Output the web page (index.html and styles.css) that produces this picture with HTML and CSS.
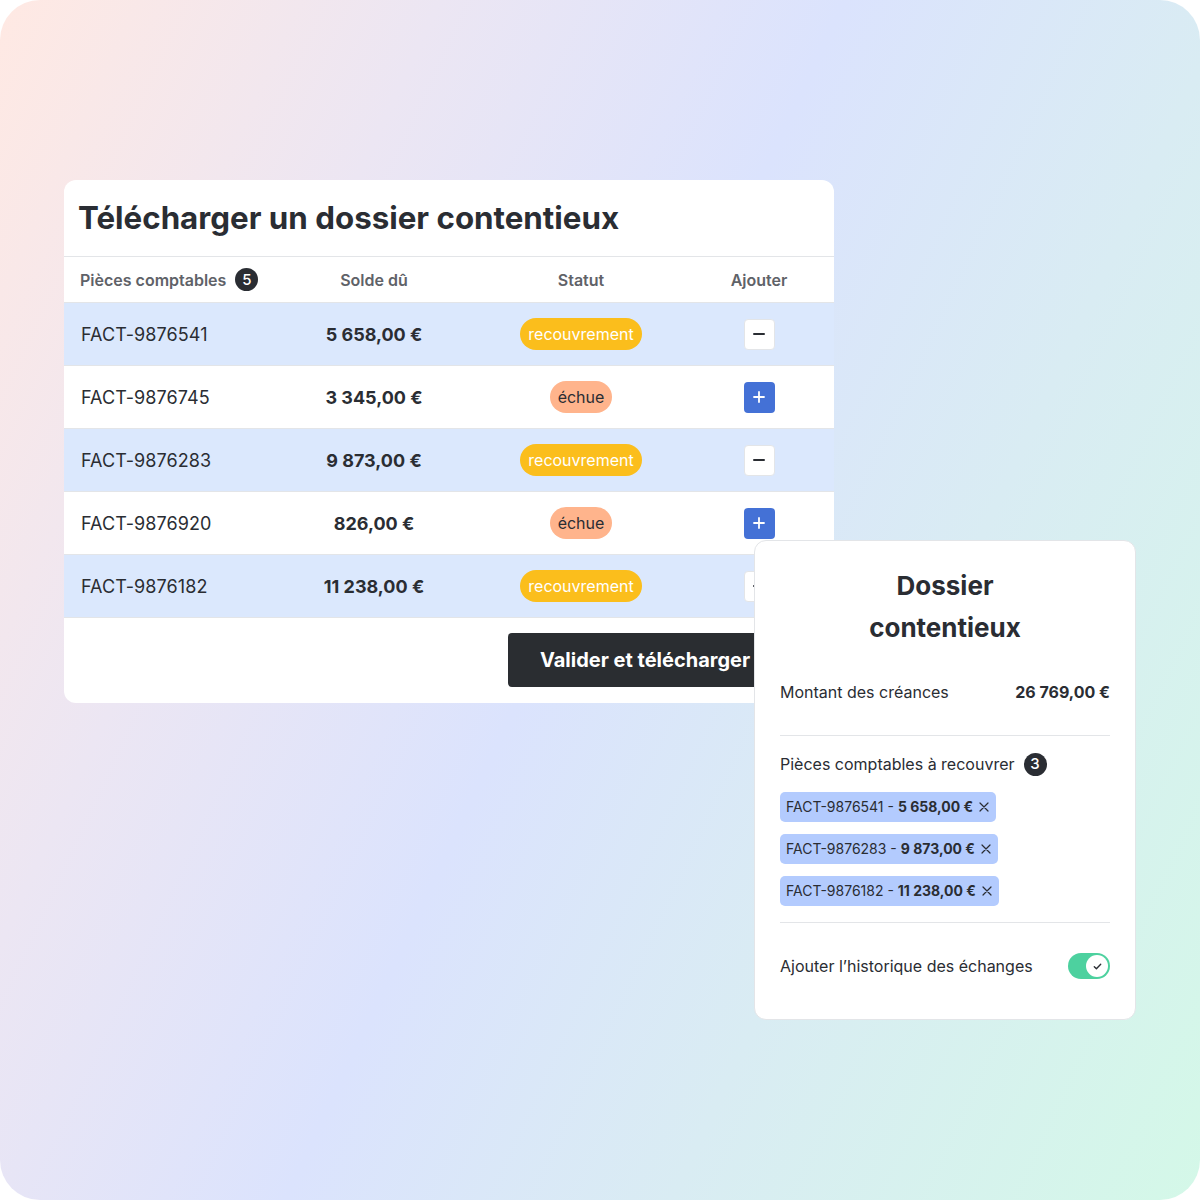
FILE: index.html
```html
<!DOCTYPE html>
<html lang="fr">
<head>
<meta charset="utf-8">
<link rel="stylesheet" href="styles.css">
</head>
<body>
<div class="canvas">
  <section class="card">
    <h1 class="card-title">Télécharger un dossier contentieux</h1>
    <div class="table">
      <div class="row head">
        <div class="cell first">Pièces comptables <span class="count">5</span></div>
        <div class="cell">Solde dû</div>
        <div class="cell">Statut</div>
        <div class="cell">Ajouter</div>
      </div>
      <div class="row tint">
        <div class="cell first ref">FACT-9876541</div>
        <div class="cell amount">5 658,00 €</div>
        <div class="cell"><span class="badge yellow">recouvrement</span></div>
        <div class="cell"><span class="btn minus"><svg viewBox="0 0 16 16" width="16" height="16"><path d="M3 8h10" stroke="#2a2d33" stroke-width="2" stroke-linecap="round"/></svg></span></div>
      </div>
      <div class="row">
        <div class="cell first ref">FACT-9876745</div>
        <div class="cell amount">3 345,00 €</div>
        <div class="cell"><span class="badge peach">échue</span></div>
        <div class="cell"><span class="btn plus"><svg viewBox="0 0 16 16" width="16" height="16"><path d="M3 8h10M8 3v10" stroke="#fff" stroke-width="1.8" stroke-linecap="round"/></svg></span></div>
      </div>
      <div class="row tint">
        <div class="cell first ref">FACT-9876283</div>
        <div class="cell amount">9 873,00 €</div>
        <div class="cell"><span class="badge yellow">recouvrement</span></div>
        <div class="cell"><span class="btn minus"><svg viewBox="0 0 16 16" width="16" height="16"><path d="M3 8h10" stroke="#2a2d33" stroke-width="2" stroke-linecap="round"/></svg></span></div>
      </div>
      <div class="row">
        <div class="cell first ref">FACT-9876920</div>
        <div class="cell amount">826,00 €</div>
        <div class="cell"><span class="badge peach">échue</span></div>
        <div class="cell"><span class="btn plus"><svg viewBox="0 0 16 16" width="16" height="16"><path d="M3 8h10M8 3v10" stroke="#fff" stroke-width="1.8" stroke-linecap="round"/></svg></span></div>
      </div>
      <div class="row tint">
        <div class="cell first ref">FACT-9876182</div>
        <div class="cell amount">11 238,00 €</div>
        <div class="cell"><span class="badge yellow">recouvrement</span></div>
        <div class="cell"><span class="btn minus"><svg viewBox="0 0 16 16" width="16" height="16"><path d="M3 8h10" stroke="#2a2d33" stroke-width="2" stroke-linecap="round"/></svg></span></div>
      </div>
    </div>
    <div class="card-foot">
      <button class="primary">Valider et télécharger</button>
    </div>
  </section>

  <aside class="panel">
    <h2 class="panel-title">Dossier<br>contentieux</h2>
    <div class="line total">
      <span>Montant des créances</span>
      <strong>26 769,00 €</strong>
    </div>
    <hr class="sep">
    <div class="line label">Pièces comptables à recouvrer <span class="count">3</span></div>
    <div class="chips">
      <span class="chip">FACT-9876541 - <b>5 658,00 €</b><svg viewBox="0 0 12 12" width="12" height="12"><path d="M2 2l8 8M10 2l-8 8" stroke="#2a2d33" stroke-width="1.2" stroke-linecap="round"/></svg></span>
      <span class="chip">FACT-9876283 - <b>9 873,00 €</b><svg viewBox="0 0 12 12" width="12" height="12"><path d="M2 2l8 8M10 2l-8 8" stroke="#2a2d33" stroke-width="1.2" stroke-linecap="round"/></svg></span>
      <span class="chip">FACT-9876182 - <b>11 238,00 €</b><svg viewBox="0 0 12 12" width="12" height="12"><path d="M2 2l8 8M10 2l-8 8" stroke="#2a2d33" stroke-width="1.2" stroke-linecap="round"/></svg></span>
    </div>
    <hr class="sep sep2">
    <div class="line toggle-row">
      <span>Ajouter l’historique des échanges</span>
      <span class="toggle"><span class="knob"><svg viewBox="0 0 12 12" width="11" height="11"><path d="M2.5 6.3l2.3 2.2L9.5 3.5" fill="none" stroke="#2a2d33" stroke-width="1.5" stroke-linecap="round" stroke-linejoin="round"/></svg></span></span>
    </div>
  </aside>
</div>
</body>
</html>
```

FILE: styles.css
```css
* { box-sizing: border-box; }
html, body { margin: 0; padding: 0; background: #ffffff; }
body { font-family: Inter, "Noto Sans", "Liberation Sans", sans-serif; color: #2a2d33; }

.canvas {
  position: relative;
  width: 1200px;
  height: 1200px;
  border-radius: 40px;
  overflow: hidden;
  padding: 180px 0 0 64px;
  background: linear-gradient(115deg, #ffe9e3 0%, #ece6f3 25%, #dbe3fd 48%, #d9ecf3 70%, #d4f8e8 100%);
}

.card {
  width: 770px;
  background: #ffffff;
  border-radius: 12px;
  overflow: hidden;
}
.card-title {
  margin: 0;
  padding: 20px 14px 20px;
  font-size: 31.3px;
  line-height: 36px;
  font-weight: 700;
  color: #2a2d33;
  border-bottom: 1px solid #e3e5e8;
}

.row {
  display: grid;
  grid-template-columns: 206px 208px 206px 150px;
  height: 63px;
  border-bottom: 1px solid #e3e5e8;
  align-items: center;
  background: #ffffff;
}
.row.tint { background: #dbe8fd; }
.row.head { height: 46px; }
.cell {
  display: flex;
  align-items: center;
  justify-content: center;
}
.cell.first { justify-content: flex-start; padding-left: 16px; }
.head .cell { font-size: 16px; font-weight: 600; color: #5f6268; }
.ref { font-size: 18px; color: #2a2d33; letter-spacing: 0.1px; }
.row .ref { padding-left: 17px; }
.amount { font-size: 18px; font-weight: 700; color: #2a2d33; }

.count {
  display: inline-flex;
  align-items: center;
  justify-content: center;
  width: 23px;
  height: 23px;
  border-radius: 50%;
  background: #2a2d33;
  color: #ffffff;
  font-size: 15px;
  font-weight: 500;
  margin-left: 9px;
}

.badge {
  display: inline-flex;
  align-items: center;
  height: 32px;
  padding: 0 8px;
  border-radius: 16px;
  font-size: 16px;
}
.badge.yellow { background: #fbbe1c; color: #ffffff; }
.badge.peach { background: #ffb48c; color: #2a2d33; }

.btn {
  display: inline-flex;
  align-items: center;
  justify-content: center;
  width: 31px;
  height: 31px;
  border-radius: 4px;
}
.btn.minus { background: #ffffff; border: 1px solid #e3e5e8; }
.btn.plus { background: #4471d6; }

.card-foot {
  display: flex;
  padding: 15px 0 16px 444px;
}
.primary {
  height: 54px;
  padding: 0 32px;
  border: none;
  border-radius: 4px;
  background: #2a2d31;
  color: #ffffff;
  font-family: inherit;
  font-size: 20px;
  font-weight: 700;
}

.panel {
  position: absolute;
  left: 754px;
  top: 540px;
  width: 382px;
  background: #ffffff;
  border: 1px solid #e3e5e8;
  border-radius: 12px;
  padding: 24px 25px 40px;
}
.panel-title {
  margin: 0 0 31px;
  text-align: center;
  font-size: 26px;
  line-height: 42px;
  font-weight: 700;
  color: #2a2d33;
}
.line {
  display: flex;
  align-items: center;
  font-size: 16px;
  line-height: 24px;
  color: #2a2d33;
}
.total { justify-content: space-between; }
.total strong { font-weight: 700; }
.sep {
  margin: 31px 0 16px;
  border: none;
  border-top: 1.5px solid #e3e5e8;
}
.label .count { margin-left: 9px; }
.chips {
  display: flex;
  flex-direction: column;
  align-items: flex-start;
  gap: 12px;
  margin-top: 16px;
}
.chip {
  display: inline-block;
  height: 30px;
  line-height: 30px;
  padding: 0 6px;
  border-radius: 5px;
  background: #b3cbfe;
  font-size: 14px;
  color: #2a2d33;
  white-space: nowrap;
}
.chip b { font-weight: 700; }
.chip svg { margin-left: 5px; vertical-align: -1px; }
.sep2 { margin: 16px 0 30px; }
.toggle-row { justify-content: space-between; height: 26px; }
.toggle {
  display: inline-flex;
  align-items: center;
  justify-content: flex-end;
  width: 42px;
  height: 26px;
  padding: 2px;
  border-radius: 13px;
  background: #4dd19f;
}
.knob {
  display: inline-flex;
  align-items: center;
  justify-content: center;
  width: 22px;
  height: 22px;
  border-radius: 50%;
  background: #ffffff;
}
```
